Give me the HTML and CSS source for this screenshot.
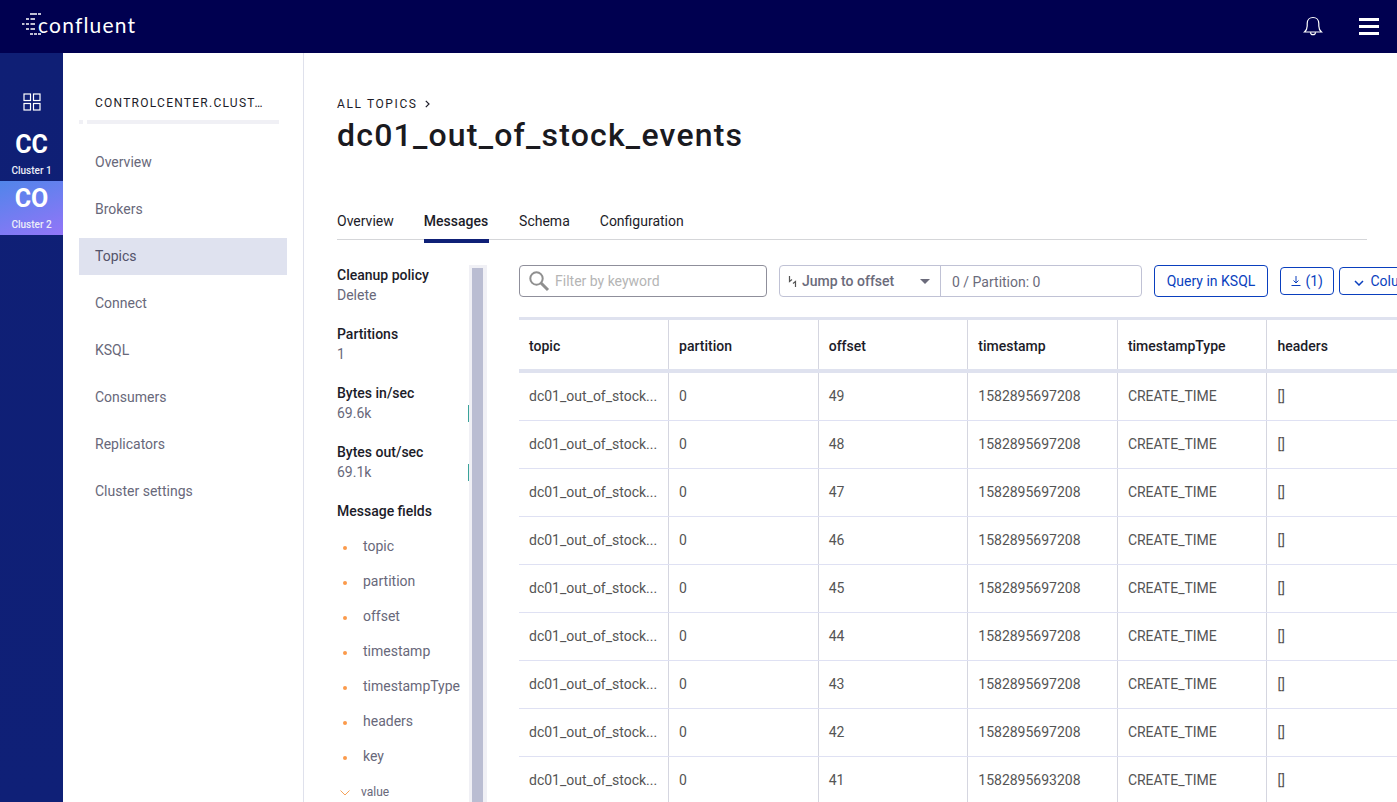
FILE: index.html
```html
<!DOCTYPE html>
<html lang="en">
<head>
  <meta charset="UTF-8">
  <title>dc01_out_of_stock_events</title>
  <link rel="stylesheet" href="styles.css">
</head>
<body>
  <header class="topbar">
    <div class="logo">
      <svg class="logo-mark" width="22" height="24" viewBox="0 0 22 24">
        <g stroke="#fff" stroke-width="1.500" fill="none">
          <path d="M9 2h7M17 2h3" stroke-dasharray="7 1 3 1"/>
          <path d="M5 7h3M9.500 7h4.500"/>
          <path d="M1 12h2.500M5 12h3M9.500 12h4.500"/>
          <path d="M5 17h3M9.500 17h4.500"/>
          <path d="M9 22h3M13 22h3M17 22h3"/>
        </g>
      </svg>
      <span class="logo-text">confluent</span>
    </div>
    <div class="topbar-icons">
      <svg width="20" height="20" viewBox="0 0 20 20" fill="none" stroke="#fff" stroke-width="1.200">
        <path d="M1.500 16h17c-1.800-1.500-2.700-3-2.700-6V7.500C15.800 4 13.400 1.500 10 1.500S4.200 4 4.200 7.500V10c0 3-.9 4.500-2.700 6z"/>
        <path d="M7.500 16.200c0 1.500 1 2.500 2.500 2.500s2.500-1 2.500-2.500"/>
      </svg>
      <div class="burger"><span></span><span></span><span></span></div>
    </div>
  </header>

  <div class="layout">
    <nav class="rail">
      <svg class="rail-grid" width="18" height="18" viewBox="0 0 18 18" fill="none" stroke="#fff" stroke-width="1.200">
        <rect x="1" y="1" width="6.500" height="6.500"/>
        <rect x="10.500" y="1" width="6.500" height="6.500"/>
        <rect x="1" y="10.500" width="6.500" height="6.500"/>
        <rect x="10.500" y="10.500" width="6.500" height="6.500"/>
      </svg>
      <a class="cluster">
        <span class="cluster-code">CC</span>
        <span class="cluster-name">Cluster 1</span>
      </a>
      <a class="cluster cluster-active">
        <span class="cluster-code">CO</span>
        <span class="cluster-name">Cluster 2</span>
      </a>
    </nav>

    <aside class="sidebar">
      <div class="sidebar-title">CONTROLCENTER.CLUST…</div>
      <div class="sidebar-rule"><span></span><span></span></div>
      <ul class="side-menu">
        <li>Overview</li>
        <li>Brokers</li>
        <li class="active">Topics</li>
        <li>Connect</li>
        <li>KSQL</li>
        <li>Consumers</li>
        <li>Replicators</li>
        <li>Cluster settings</li>
      </ul>
    </aside>

    <main class="content">
      <div class="crumb">
        ALL TOPICS
        <svg width="5" height="8" viewBox="0 0 5 8" fill="none" stroke="#1c1c29" stroke-width="1.200"><path d="M.8 .8 4 4 .8 7.200"/></svg>
      </div>
      <h1>dc01_out_of_stock_events</h1>

      <div class="tabs">
        <a>Overview</a>
        <a class="active">Messages</a>
        <a>Schema</a>
        <a>Configuration</a>
      </div>

      <div class="panes">
        <section class="info">
          <div class="info-scroll">
            <div class="stat"><b>Cleanup policy</b><span>Delete</span></div>
            <div class="stat"><b>Partitions</b><span>1</span></div>
            <div class="stat"><b>Bytes in/sec</b><span>69.6k</span><i class="spark"></i></div>
            <div class="stat"><b>Bytes out/sec</b><span>69.1k</span><i class="spark"></i></div>
            <div class="fields-title">Message fields</div>
            <ul class="fields">
              <li>topic</li>
              <li>partition</li>
              <li>offset</li>
              <li>timestamp</li>
              <li>timestampType</li>
              <li>headers</li>
              <li>key</li>
            </ul>
            <div class="field-value">
              <svg width="10" height="6" viewBox="0 0 10 6" fill="none" stroke="#f5a35c" stroke-width="1"><path d="M.5 .5 5 5 9.500 .5"/></svg>
              value
            </div>
          </div>
          <div class="scrollbar"><div class="scrollbar-thumb"></div></div>
        </section>

        <section class="messages">
          <div class="toolbar">
            <label class="search">
              <svg width="22" height="22" viewBox="0 0 22 22" fill="none" stroke="#8f8f8f">
                <circle cx="8.500" cy="8.500" r="6.200" stroke-width="2"/>
                <path d="M13 13l7 7" stroke-width="3"/>
              </svg>
              <span>Filter by keyword</span>
            </label>
            <div class="jump">
              <div class="jump-select">
                <svg width="9" height="11" viewBox="0 0 9 11" fill="none" stroke="#555" stroke-width="1.200"><path d="M1.500 0v5.500L4 3.500M7.500 11V5.500L5 7.500"/></svg>
                <span>Jump to offset</span>
                <i class="caret"></i>
              </div>
              <div class="jump-value">0 / Partition: 0</div>
            </div>
            <button class="btn btn-query">Query in KSQL</button>
            <button class="btn btn-small">
              <svg width="10" height="10" viewBox="0 0 10 10" fill="none" stroke="#0a3fbe"><path d="M5 0v7M2.500 4.500 5 7l2.500-2.500M.5 9.500h9"/></svg>
              (1)
            </button>
            <button class="btn btn-small btn-columns">
              <svg width="10" height="6" viewBox="0 0 10 6" fill="none" stroke="#0a3fbe" stroke-width="1.500"><path d="M1 1l4 4 4-4"/></svg>
              Columns
            </button>
          </div>

          <table class="grid">
            <thead>
              <tr><th>topic</th><th>partition</th><th>offset</th><th>timestamp</th><th>timestampType</th><th>headers</th></tr>
            </thead>
            <tbody>
              <tr><td>dc01_out_of_stock...</td><td>0</td><td>49</td><td>1582895697208</td><td>CREATE_TIME</td><td>[]</td></tr>
              <tr><td>dc01_out_of_stock...</td><td>0</td><td>48</td><td>1582895697208</td><td>CREATE_TIME</td><td>[]</td></tr>
              <tr><td>dc01_out_of_stock...</td><td>0</td><td>47</td><td>1582895697208</td><td>CREATE_TIME</td><td>[]</td></tr>
              <tr><td>dc01_out_of_stock...</td><td>0</td><td>46</td><td>1582895697208</td><td>CREATE_TIME</td><td>[]</td></tr>
              <tr><td>dc01_out_of_stock...</td><td>0</td><td>45</td><td>1582895697208</td><td>CREATE_TIME</td><td>[]</td></tr>
              <tr><td>dc01_out_of_stock...</td><td>0</td><td>44</td><td>1582895697208</td><td>CREATE_TIME</td><td>[]</td></tr>
              <tr><td>dc01_out_of_stock...</td><td>0</td><td>43</td><td>1582895697208</td><td>CREATE_TIME</td><td>[]</td></tr>
              <tr><td>dc01_out_of_stock...</td><td>0</td><td>42</td><td>1582895697208</td><td>CREATE_TIME</td><td>[]</td></tr>
              <tr><td>dc01_out_of_stock...</td><td>0</td><td>41</td><td>1582895693208</td><td>CREATE_TIME</td><td>[]</td></tr>
            </tbody>
          </table>
        </section>
      </div>
    </main>
  </div>
</body>
</html>
```

FILE: styles.css
```css
* {
  box-sizing: border-box;
}

html, body {
  height: 100%;
}

body {
  margin: 0;
  font-family: 'Roboto', sans-serif;
  font-size: 14px;
  color: #1c1c29;
  background: #fff;
  overflow: hidden;
}

ul {
  margin: 0;
  padding: 0;
  list-style: none;
}

.topbar {
  height: 53px;
  background: #000050;
  display: flex;
  align-items: center;
  justify-content: space-between;
  padding: 0 18px 5px 21px;
}

.logo {
  display: flex;
  align-items: center;
}

.logo-mark {
  margin-right: -5px;
}

.logo-text {
  font-family: 'Lato', sans-serif;
  font-weight: 400;
  font-size: 21px;
  letter-spacing: 1.200px;
  color: #fff;
}

.topbar-icons {
  display: flex;
  align-items: center;
  gap: 36px;
  margin-top: 4px;
}

.burger {
  width: 20px;
  display: flex;
  flex-direction: column;
  gap: 4px;
}

.burger span {
  height: 3px;
  background: #fff;
}

.layout {
  display: flex;
  height: 749px;
}

.rail {
  width: 63px;
  background: linear-gradient(180deg, #0f1f75, #0f2077);
  padding-top: 40px;
  display: flex;
  flex-direction: column;
  align-items: center;
}

.rail-grid {
  margin-bottom: 16px;
}

.cluster {
  width: 100%;
  height: 54px;
  padding-top: 1px;
  color: #fff;
  display: flex;
  flex-direction: column;
  align-items: center;
}

.cluster-active {
  background: linear-gradient(160deg, #5085ea, #9375f8);
}

.cluster-code {
  font-size: 25px;
  font-weight: 700;
  line-height: 34px;
}

.cluster-name {
  margin-top: 2px;
  font-size: 10px;
  font-weight: 500;
  line-height: 14px;
  color: #eceef8;
}

.sidebar {
  width: 241px;
  border-right: 1px solid #dfe1ec;
  padding: 43px 16px 0;
}

.sidebar-title {
  font-size: 12px;
  font-weight: 400;
  letter-spacing: 1.250px;
  line-height: 14px;
  padding-left: 16px;
  color: #1c1c29;
}

.sidebar-rule {
  display: flex;
  gap: 4px;
  margin: 10px 8px 0 0;
}

.sidebar-rule span {
  height: 4px;
  width: 4px;
  background: #f0f0f5;
}

.sidebar-rule span + span {
  flex: 1;
}

.side-menu {
  margin-top: 20px;
}

.side-menu li {
  height: 37px;
  line-height: 37px;
  margin-bottom: 10px;
  padding-left: 16px;
  color: #68687a;
}

.side-menu .active {
  background: #dfe2ef;
  color: #53536a;
}

.content {
  flex: 1;
  min-width: 0;
  padding: 44px 0 0 33px;
  overflow: hidden;
}

.crumb {
  font-size: 12px;
  letter-spacing: 1.600px;
  line-height: 15px;
}

.crumb svg {
  margin-left: 3px;
}

h1 {
  margin: 5px 0 0;
  font-size: 32px;
  font-weight: 500;
  letter-spacing: 1.200px;
  line-height: 36px;
  color: #1a1a1f;
}

.tabs {
  display: flex;
  gap: 30px;
  margin: 51px 30px 0 0;
  height: 36px;
  border-bottom: 1px solid #d5d6d9;
}

.tabs a {
  height: 39px;
  line-height: 34px;
  color: #1c1c29;
}

.tabs .active {
  font-weight: 500;
  padding-right: 1px;
  border-bottom: 4px solid #0f2077;
}

.panes {
  display: flex;
  margin-top: 25px;
}

.info {
  width: 150px;
  flex: none;
  display: flex;
  height: 540px;
  overflow: hidden;
}

.info-scroll {
  width: 132px;
  flex: none;
}

.scrollbar {
  width: 18px;
  background: #f0f0f5;
  padding: 3px 4px 0 3px;
}

.scrollbar-thumb {
  height: 100%;
  background: #babdd2;
}

.stat {
  position: relative;
  height: 59px;
}

.stat b {
  display: block;
  font-weight: 500;
  line-height: 20px;
}

.stat span {
  display: block;
  line-height: 20px;
  color: #68687a;
}

.spark {
  position: absolute;
  right: 0;
  top: 22px;
  width: 1px;
  height: 17px;
  background: #3aa39a;
}

.fields-title {
  font-weight: 500;
  line-height: 20px;
}

.fields {
  margin-top: 8px;
}

.fields li {
  position: relative;
  height: 35px;
  line-height: 35px;
  padding-left: 26px;
  color: #68687a;
  white-space: nowrap;
}

.fields li::before {
  content: "";
  position: absolute;
  left: 6px;
  top: 17px;
  width: 4px;
  height: 4px;
  border-radius: 50%;
  background: #fb9a4b;
}

.field-value {
  font-size: 12px;
  line-height: 37px;
  color: #68687a;
  padding-left: 3px;
  display: flex;
  align-items: center;
  gap: 11px;
}

.messages {
  margin-left: 32px;
  flex: none;
  width: 1050px;
}

.toolbar {
  display: flex;
  align-items: flex-start;
  height: 52px;
}

.search {
  width: 248px;
  height: 32px;
  border: 1px solid #8f8f9b;
  border-radius: 4px;
  display: flex;
  align-items: center;
  padding-left: 8px;
  gap: 5px;
  color: #b5b5b5;
}

.jump {
  display: flex;
  width: 363px;
  height: 32px;
  margin-left: 12px;
  border: 1px solid #c0c2d5;
  border-radius: 4px;
  color: #6b6b7b;
}

.jump-select {
  width: 161px;
  display: flex;
  align-items: center;
  padding: 0 10px 0 8px;
  gap: 5px;
  border-right: 1px solid #c0c2d5;
  font-weight: 500;
}

.jump-select .caret {
  margin-left: auto;
  border: 5px solid transparent;
  border-top: 5px solid #6b6b7b;
  border-bottom: 0;
}

.jump-value {
  flex: 1;
  padding-left: 11px;
  line-height: 32px;
}

.btn {
  font-family: inherit;
  font-size: 14px;
  color: #0a3fbe;
  background: #fff;
  border: 1px solid #0a3fbe;
  border-radius: 4px;
  padding: 0;
  flex: none;
}

.btn-query {
  width: 114px;
  height: 32px;
  margin-left: 12px;
}

.btn-small {
  width: 54px;
  height: 28px;
  margin: 2px 0 0 12px;
}

.btn-columns {
  width: 110px;
  margin-left: 5px;
  text-align: left;
  padding-left: 14px;
}

.btn-small svg {
  margin-right: 1px;
}

.btn-columns svg {
  margin-right: 3px;
}

.grid {
  border-collapse: collapse;
  table-layout: fixed;
  width: 897.600px;
  border-top: 3px solid #dfe2ef;
}

.grid th, .grid td {
  width: 149.600px;
  padding: 0 10px;
  text-align: left;
  white-space: nowrap;
  overflow: hidden;
  border-left: 1px solid #d5d6e0;
}

.grid th:first-child, .grid td:first-child {
  border-left: 0;
}

.grid th {
  height: 52px;
  padding-top: 4px;
  font-weight: 500;
  border-bottom: 4px solid #dfe2ef;
}

.grid td {
  height: 48px;
  padding-bottom: 2px;
  color: #555;
  border-bottom: 1px solid #dfe1f3;
}

.grid tbody tr:first-child td {
  height: 50px;
  padding-bottom: 0;
}
```
